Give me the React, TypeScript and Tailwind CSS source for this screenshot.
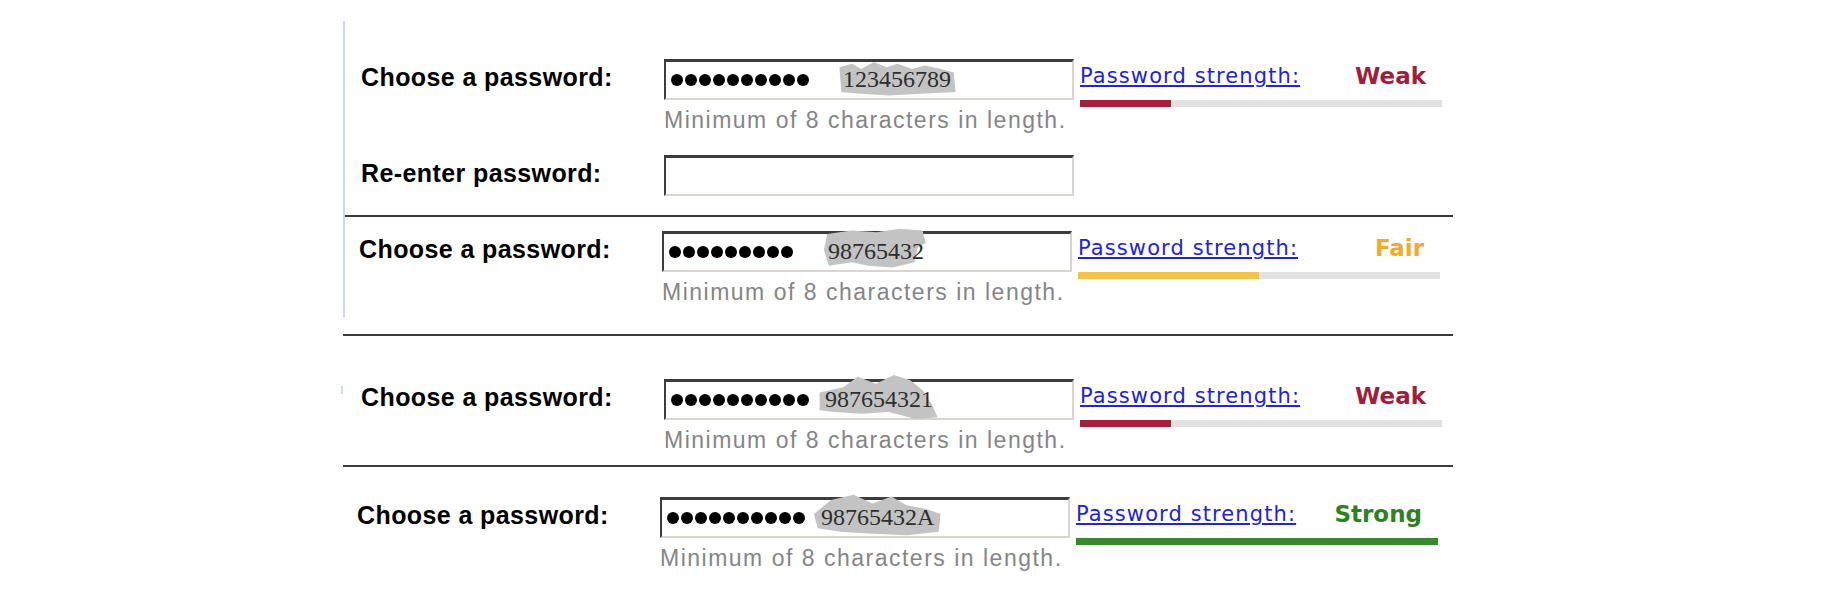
type Strength = {
  label: string;
  text: string;
  bar: string;
  pct: number;
};

type Section = {
  shift: number;
  dots: number;
  value: string;
  gap: number;
  blob: string;
  strength: Strength;
  reenter?: boolean;
};

const WEAK: Strength = { label: "Weak", text: "text-[#a01e37]", bar: "bg-[#a51f38]", pct: 25 };
const FAIR: Strength = { label: "Fair", text: "text-[#f0aa2c]", bar: "bg-[#f6c445]", pct: 50 };
const STRONG: Strength = { label: "Strong", text: "text-[#2f8022]", bar: "bg-[#358a2a]", pct: 100 };

const labelFont = { fontFamily: '"Liberation Sans", Arial, sans-serif' };
const uiFont = { fontFamily: '"DejaVu Sans", Verdana, sans-serif' };

// the grey scribble someone drew over the typed value
function Blob({ d }: { d: string }) {
  return (
    <svg className="absolute left-0 top-0 h-full w-full" viewBox="0 0 140 50" preserveAspectRatio="none">
      <path d={d} fill="#c3c3c3" />
    </svg>
  );
}

function PasswordBox({ s }: { s: Section }) {
  return (
    <div className="relative flex h-[41px] w-[410px] items-center border-t-[3px] border-l-2 border-r-2 border-b-2 border-t-[#3c3c3c] border-l-[#3c3c3c] border-r-[#d8d5d0] border-b-[#d8d5d0] bg-white pl-[5px]">
      <div className="flex gap-[2px]">
        {Array.from({ length: s.dots }).map((_, i) => (
          <span key={i} className="block h-[12px] w-[12px] rounded-full bg-black" />
        ))}
      </div>
      <span className="relative" style={{ marginLeft: s.gap }}>
        <span className="absolute -left-[9px] -right-[10px] -top-[12px] -bottom-[6px]">
          <Blob d={s.blob} />
        </span>
        <span
          className="relative text-[24px] leading-none text-[#2e2e2e]"
          style={{ fontFamily: '"Liberation Serif", "Times New Roman", serif' }}
        >
          {s.value}
        </span>
      </span>
    </div>
  );
}

function StrengthMeter({ s }: { s: Strength }) {
  return (
    <div className="flex w-[362px] flex-col" style={uiFont}>
      <div className="flex h-[41px] items-center justify-between pb-[7px] pr-[16px]">
        <a href="#" className="text-[21px] leading-6 tracking-[1.1px] text-[#2323d0] underline underline-offset-2">
          Password strength:
        </a>
        <span className={`text-[23px] font-bold leading-6 ${s.text}`}>{s.label}</span>
      </div>
      <div className="h-[7px] bg-[#e1e1e1]">
        <div className={`h-full ${s.bar}`} style={{ width: `${s.pct}%` }} />
      </div>
    </div>
  );
}

function Label({ children }: { children: React.ReactNode }) {
  return (
    <div className="w-[303px] shrink-0 pt-[4px] text-[25px] font-bold leading-7 tracking-[0.4px] text-black" style={labelFont}>
      {children}
    </div>
  );
}

function Hint() {
  return (
    <div className="mt-[8px] text-[23px] leading-6 tracking-[1.5px] text-[#858585]" style={labelFont}>
      Minimum of 8 characters in length.
    </div>
  );
}

function Block({ s }: { s: Section }) {
  return (
    <div style={{ paddingLeft: s.shift }}>
      <div className="flex items-start">
        <Label>Choose a password:</Label>
        <div className="flex flex-col">
          <div className="flex items-start gap-[6px]">
            <PasswordBox s={s} />
            <StrengthMeter s={s.strength} />
          </div>
          <div className="-mt-[7px]">
            <Hint />
          </div>
        </div>
      </div>
      {s.reenter && (
        <div className="mt-[23px] flex items-start">
          <Label>Re-enter password:</Label>
          <div className="h-[41px] w-[410px] border-t-[3px] border-l-2 border-r-2 border-b-2 border-t-[#3c3c3c] border-l-[#3c3c3c] border-r-[#d8d5d0] border-b-[#d8d5d0] bg-white" />
        </div>
      )}
    </div>
  );
}

const sections: Section[] = [
  {
    shift: 16,
    dots: 10,
    value: "123456789",
    gap: 34,
    blob: "M6 14 L20 10 L30 16 L44 8 L58 14 L70 10 L86 16 L100 12 L118 16 L132 20 L134 42 L96 44 L60 46 L30 44 L8 42 Z",
    strength: WEAK,
    reenter: true,
  },
  {
    shift: 14,
    dots: 9,
    value: "98765432",
    gap: 35,
    blob: "M10 8 L40 4 L70 6 L98 2 L126 4 L130 18 L120 24 L116 40 L90 46 L60 44 L40 40 L12 44 L6 26 Z",
    strength: FAIR,
  },
  {
    shift: 18,
    dots: 10,
    value: "987654321",
    gap: 16,
    blob: "M4 20 L30 14 L46 2 L66 10 L86 0 L104 6 L118 18 L128 34 L134 48 L110 50 L80 42 L50 44 L20 42 L4 40 Z",
    strength: WEAK,
  },
  {
    shift: 14,
    dots: 10,
    value: "98765432A",
    gap: 16,
    blob: "M2 24 L20 8 L44 2 L64 12 L84 4 L100 14 L120 18 L136 24 L134 44 L100 48 L60 46 L30 44 L6 40 Z",
    strength: STRONG,
  },
];

export default function App() {
  return (
    <div className="min-h-[600px] w-[1844px] bg-white pt-[21px]">
      <div className="ml-[343px] w-[1110px]">
        <div className="border-l-2 border-[#cdd8ee] pb-[13px]">
          <div className="border-b-2 border-[#3a3a3a] pt-[38px] pb-[19px]">
            <Block s={sections[0]} />
          </div>
          <div className="pt-[14px]">
            <Block s={sections[1]} />
          </div>
        </div>
        <div className="relative mt-[17px] border-t-2 border-[#3a3a3a] pt-[43px] pb-[13px]">
          <span className="absolute -left-[2px] top-[50px] h-[8px] w-[2px] bg-[#cdd8ee]" />
          <Block s={sections[2]} />
        </div>
        <div className="border-t-2 border-[#3a3a3a] pt-[30px]">
          <Block s={sections[3]} />
        </div>
      </div>
    </div>
  );
}
